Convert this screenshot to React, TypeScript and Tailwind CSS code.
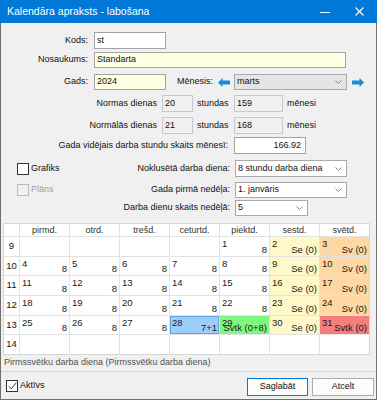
import React from 'react';

type Cell = { d?: string; v?: string; c?: string };

const SE = 'bg-[#fff8c8]';
const SV = 'bg-[#fdd8a4]';

const weeks: { n: string; cells: Cell[] }[] = [
  {
    n: '9',
    cells: [{}, {}, {}, {}, { d: '1', v: '8' }, { d: '2', v: 'Se (0)', c: SE }, { d: '3', v: 'Sv (0)', c: SV }],
  },
  {
    n: '10',
    cells: [
      { d: '4', v: '8' },
      { d: '5', v: '8' },
      { d: '6', v: '8' },
      { d: '7', v: '8' },
      { d: '8', v: '8' },
      { d: '9', v: 'Se (0)', c: SE },
      { d: '10', v: 'Sv (0)', c: SV },
    ],
  },
  {
    n: '11',
    cells: [
      { d: '11', v: '8' },
      { d: '12', v: '8' },
      { d: '13', v: '8' },
      { d: '14', v: '8' },
      { d: '15', v: '8' },
      { d: '16', v: 'Se (0)', c: SE },
      { d: '17', v: 'Sv (0)', c: SV },
    ],
  },
  {
    n: '12',
    cells: [
      { d: '18', v: '8' },
      { d: '19', v: '8' },
      { d: '20', v: '8' },
      { d: '21', v: '8' },
      { d: '22', v: '8' },
      { d: '23', v: 'Se (0)', c: SE },
      { d: '24', v: 'Sv (0)', c: SV },
    ],
  },
  {
    n: '13',
    cells: [
      { d: '25', v: '8' },
      { d: '26', v: '8' },
      { d: '27', v: '8' },
      { d: '28', v: '7+1', c: 'bg-[#9dcdfa] outline outline-1 -outline-offset-1 outline-[#5ea3e6]' },
      { d: '29', v: 'Svtk (0+8)', c: 'bg-[#80f880]' },
      { d: '30', v: 'Se (0)', c: SE },
      { d: '31', v: 'Svtk (0)', c: 'bg-[#f47d7d]' },
    ],
  },
  { n: '14', cells: [{}, {}, {}, {}, {}, {}, {}] },
];

const days = ['pirmd.', 'otrd.', 'trešd.', 'ceturtd.', 'piektd.', 'sestd.', 'svētd.'];

function Chevron() {
  return (
    <svg width="7" height="4" viewBox="0 0 7 4">
      <polyline points="0.5,0.5 3.5,3.5 6.5,0.5" fill="none" stroke="#8a8a8a" strokeWidth="1" />
    </svg>
  );
}

function Arrow({ dir }: { dir: 'l' | 'r' }) {
  return (
    <svg width="12" height="9" viewBox="0 0 12 9">
      <path
        d={dir === 'l' ? 'M0 4.5 L4.5 0 V2.5 H12 V6.5 H4.5 V9 Z' : 'M12 4.5 L7.5 0 V2.5 H0 V6.5 H7.5 V9 Z'}
        fill="#1c8ad8"
      />
    </svg>
  );
}

function Select({ value, w, bg }: { value: string; w: string; bg: string }) {
  return (
    <div className={`${w} ${bg} h-full border border-[#a9a9a9] flex items-center justify-between pl-[2px] pr-[4px]`}>
      <span>{value}</span>
      <Chevron />
    </div>
  );
}

export default function App() {
  return (
    <div className="w-[377px] h-[400px] flex flex-col bg-[#f0f0f0] overflow-hidden font-['Liberation_Sans',Arial,sans-serif] text-[9px] text-[#111]">
      {/* title bar */}
      <div className="h-[23px] shrink-0 bg-[#0078d7] flex items-center pl-[7px] pr-[13px] text-white text-[10.5px]">
        <span>Kalendāra apraksts - labošana</span>
        <div className="ml-auto flex items-center gap-[25px]">
          <svg width="10" height="10" viewBox="0 0 10 10">
            <line x1="0" y1="5.5" x2="10" y2="5.5" stroke="#fff" strokeWidth="1" />
          </svg>
          <svg width="9" height="9" viewBox="0 0 9 9">
            <line x1="0.5" y1="0.5" x2="8.5" y2="8.5" stroke="#fff" strokeWidth="1.1" />
            <line x1="8.5" y1="0.5" x2="0.5" y2="8.5" stroke="#fff" strokeWidth="1.1" />
          </svg>
        </div>
      </div>

      {/* body */}
      <div className="flex-1 flex flex-col border-x border-b border-[#707070]">
        {/* Kods */}
        <div className="mt-[9px] h-[17px] flex items-center">
          <div className="w-[87px] text-right">Kods:</div>
          <div className="ml-[6px] w-[72px] h-full bg-white border border-[#a3a3a3] flex items-center pl-[2px]">st</div>
        </div>
        {/* Nosaukums */}
        <div className="mt-[3px] h-[16px] flex items-center">
          <div className="w-[87px] text-right">Nosaukums:</div>
          <div className="ml-[6px] w-[252px] h-full bg-[#ffffe1] border border-[#a3a3a3] flex items-center pl-[2px]">
            Standarta
          </div>
        </div>
        {/* Gads */}
        <div className="mt-[6px] h-[16px] flex items-center">
          <div className="w-[87px] text-right">Gads:</div>
          <div className="ml-[6px] w-[72px] h-full bg-[#ffffe1] border border-[#a3a3a3] flex items-center pl-[2px]">
            2024
          </div>
          <div className="ml-[11px] w-[41px]">Mēnesis:</div>
          <Arrow dir="l" />
          <div className="ml-[4px] h-full">
            <Select value="marts" w="w-[113px]" bg="bg-[#e5e5e5]" />
          </div>
          <div className="ml-[5px] flex items-center">
            <Arrow dir="r" />
          </div>
        </div>
        {/* Normas dienas */}
        <div className="mt-[5px] h-[17px] flex items-center">
          <div className="w-[156px] text-right">Normas dienas</div>
          <div className="ml-[5px] w-[31px] h-full border border-[#c9c9c9] flex items-center pl-[2px]">20</div>
          <div className="ml-[4px] w-[37px]">stundas</div>
          <div className="w-[49px] h-full border border-[#c9c9c9] flex items-center pl-[2px]">159</div>
          <div className="ml-[4px]">mēnesi</div>
        </div>
        {/* Normālās dienas */}
        <div className="mt-[5px] h-[17px] flex items-center">
          <div className="w-[156px] text-right">Normālās dienas</div>
          <div className="ml-[5px] w-[31px] h-full border border-[#c9c9c9] flex items-center pl-[2px]">21</div>
          <div className="ml-[4px] w-[37px]">stundas</div>
          <div className="w-[49px] h-full border border-[#c9c9c9] flex items-center pl-[2px]">168</div>
          <div className="ml-[4px]">mēnesi</div>
        </div>
        {/* Gada vidējais */}
        <div className="mt-[3px] h-[17px] flex items-center">
          <div className="w-[227px] text-right">Gada vidējais darba stundu skaits mēnesī:</div>
          <div className="ml-[6px] w-[72px] h-full bg-white border border-[#a3a3a3] flex items-center justify-end pr-[4px]">
            166.92
          </div>
        </div>
        {/* Noklusētā */}
        <div className="mt-[6px] h-[17px] flex items-center">
          <div className="w-[229px] flex items-center">
            <div className="ml-[16px] w-[12px] h-[12px] bg-white border border-[#333]" />
            <span className="ml-[2px]">Grafiks</span>
            <span className="ml-auto">Noklusētā darba diena:</span>
          </div>
          <div className="ml-[5px] h-full">
            <Select value="8 stundu darba diena" w="w-[112px]" bg="bg-white" />
          </div>
        </div>
        {/* Gada pirmā */}
        <div className="mt-[5px] h-[16px] flex items-center">
          <div className="w-[229px] flex items-center">
            <div className="ml-[16px] w-[12px] h-[12px] bg-[#f0f0f0] border border-[#bcbcbc]" />
            <span className="ml-[2px] text-[#a0a0a0]">Plāns</span>
            <span className="ml-auto">Gada pirmā nedēļa:</span>
          </div>
          <div className="ml-[5px] h-full">
            <Select value="1. janvāris" w="w-[112px]" bg="bg-white" />
          </div>
        </div>
        {/* Darba dienu */}
        <div className="mt-[2px] h-[16px] flex items-center">
          <div className="w-[229px] text-right">Darba dienu skaits nedēļā:</div>
          <div className="ml-[5px] h-full">
            <Select value="5" w="w-[73px]" bg="bg-white" />
          </div>
        </div>

        {/* Calendar grid */}
        <div className="mt-[7px] ml-[2px] w-fit grid grid-cols-[15px_repeat(7,49px)] grid-rows-[12px_19px_18px_19px_19px_18px_19px] gap-px bg-[#e3e3e3] border border-[#d6d6d6]">
          <div className="bg-white" />
          {days.map((d) => (
            <div key={d} className="bg-white flex items-center justify-center text-[#333] leading-none">
              {d}
            </div>
          ))}
          {weeks.map((w) => (
            <React.Fragment key={w.n}>
              <div className="bg-white flex items-center justify-center text-[9.5px] text-[#111]">{w.n}</div>
              {w.cells.map((c, i) => (
                <div key={i} className={`${c.c ?? 'bg-white'} grid px-[2px] text-[9.5px] text-[#1a1a1a]`}>
                  {c.d && <span className="[grid-area:1/1] self-start justify-self-start leading-[11px] pt-[1px]">{c.d}</span>}
                  {c.v && <span className="[grid-area:1/1] self-end justify-self-end leading-[11px] pb-[1px]">{c.v}</span>}
                </div>
              ))}
            </React.Fragment>
          ))}
        </div>

        {/* status */}
        <div className="h-[16px] flex items-center pl-[3px] text-[#505050]">
          Pirmssvētku darba diena (Pirmssvētku darba diena)
        </div>
        <div className="h-px bg-[#d8d8d8]" />
        {/* bottom */}
        <div className="flex-1 flex items-center pr-[2px]">
          <div className="ml-[5px] w-[12px] h-[12px] bg-white border border-[#333] flex items-center justify-center">
            <svg width="9" height="8" viewBox="0 0 9 8">
              <polyline points="0.8,4.2 3.2,6.8 8.3,0.8" fill="none" stroke="#222" strokeWidth="0.9" />
            </svg>
          </div>
          <span className="ml-[2px]">Aktīvs</span>
          <div className="ml-auto flex items-center gap-[4px] mt-[3px]">
            <div className="w-[61px] h-[18px] bg-[#fdfdfd] border border-[#0078d7] flex items-center justify-center">
              Saglabāt
            </div>
            <div className="w-[62px] h-[18px] bg-[#fdfdfd] border border-[#adadad] flex items-center justify-center">
              Atcelt
            </div>
          </div>
        </div>
      </div>
    </div>
  );
}
